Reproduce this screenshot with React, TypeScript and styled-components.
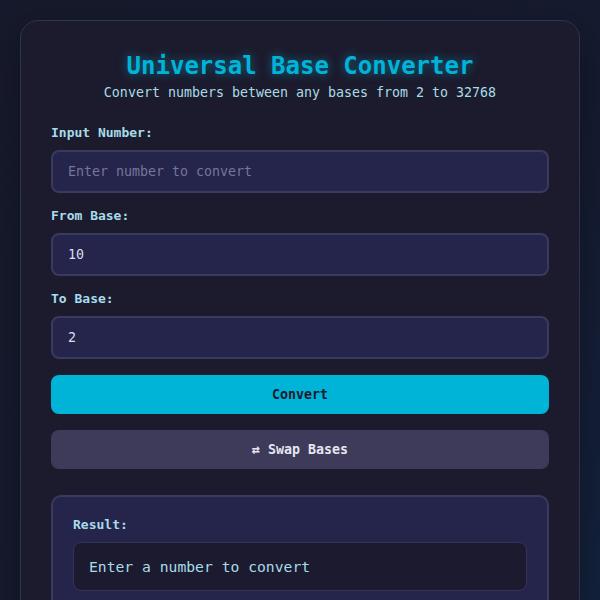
import styled, { createGlobalStyle } from "styled-components";

const GlobalStyle = createGlobalStyle`
  html, body {
    margin: 0;
    padding: 0;
    min-height: 100%;
  }
  body {
    background: linear-gradient(135deg, #171a2c 0%, #161b30 55%, #13233f 100%);
    min-height: 600px;
    font-family: "DejaVu Sans Mono", "Liberation Mono", monospace;
  }
  * {
    box-sizing: border-box;
  }
`;

function App() {
  return (
    <>
      <GlobalStyle />
      <Page>
        <Card>
          <Title>Universal Base Converter</Title>
          <Subtitle>Convert numbers between any bases from 2 to 32768</Subtitle>

          <Field>
            <Label htmlFor="input-number">Input Number:</Label>
            <Input id="input-number" placeholder="Enter number to convert" />
          </Field>

          <Field>
            <Label htmlFor="from-base">From Base:</Label>
            <Input id="from-base" defaultValue="10" />
          </Field>

          <Field>
            <Label htmlFor="to-base">To Base:</Label>
            <Input id="to-base" defaultValue="2" />
          </Field>

          <Actions>
            <Button variant="primary">Convert</Button>
            <Button variant="secondary">⇄ Swap Bases</Button>
          </Actions>

          <ResultBox>
            <ResultLabel>Result:</ResultLabel>
            <ResultValue>Enter a number to convert</ResultValue>
          </ResultBox>
        </Card>
      </Page>
    </>
  );
}

export default App;

const Page = styled.div`
  padding: 20px;
`;

const Card = styled.div`
  display: flex;
  flex-direction: column;
  width: 560px;
  padding: 31px 30px 30px;
  background: #1c1b2e;
  border: 1px solid #30344e;
  border-radius: 18px;
  box-shadow: 0 10px 40px rgba(0, 0, 0, 0.35);
`;

const Title = styled.h1`
  margin: 0;
  text-align: center;
  font-size: 24px;
  line-height: 28px;
  font-weight: 700;
  color: #00b4d8;
  text-shadow: 0 0 10px rgba(0, 180, 216, 0.55);
`;

const Subtitle = styled.p`
  margin: 5px 0 24px;
  text-align: center;
  font-size: 13.3px;
  line-height: 16px;
  color: #a9dce8;
`;

const Field = styled.div`
  display: flex;
  flex-direction: column;
  gap: 9px;
  margin-bottom: 15px;
`;

const Label = styled.label`
  font-size: 13px;
  line-height: 16px;
  font-weight: 700;
  color: #a8dcea;
`;

const Input = styled.input`
  height: 43px;
  padding: 0 15px;
  background: #25244a;
  border: 2px solid #3a395e;
  border-radius: 8px;
  font-family: inherit;
  font-size: 13.3px;
  color: #dcdcec;
  outline: none;

  &::placeholder {
    color: #76769a;
  }
`;

const Actions = styled.div`
  display: flex;
  flex-direction: column;
  gap: 16px;
  margin-top: 1px;
`;

const Button = styled.button<{ variant: "primary" | "secondary" }>`
  height: 39px;
  border: none;
  border-radius: 8px;
  font-family: inherit;
  font-size: 13.3px;
  font-weight: 700;
  cursor: pointer;
  background: ${({ variant }) => (variant === "primary" ? "#00b4d8" : "#3d3a5a")};
  color: ${({ variant }) => (variant === "primary" ? "#1a1a2e" : "#e6e6f0")};
`;

const ResultBox = styled.div`
  display: flex;
  flex-direction: column;
  gap: 9px;
  margin-top: 26px;
  padding: 20px 20px 20px;
  background: #25244a;
  border: 2px solid #3a395e;
  border-radius: 10px;
`;

const ResultLabel = styled.div`
  font-size: 13px;
  line-height: 16px;
  font-weight: 700;
  color: #a8dcea;
`;

const ResultValue = styled.div`
  display: flex;
  align-items: center;
  height: 49px;
  padding: 0 15px;
  background: #1c1a2f;
  border: 1px solid #34335a;
  border-radius: 8px;
  font-size: 14.7px;
  color: #a8dcea;
`;
